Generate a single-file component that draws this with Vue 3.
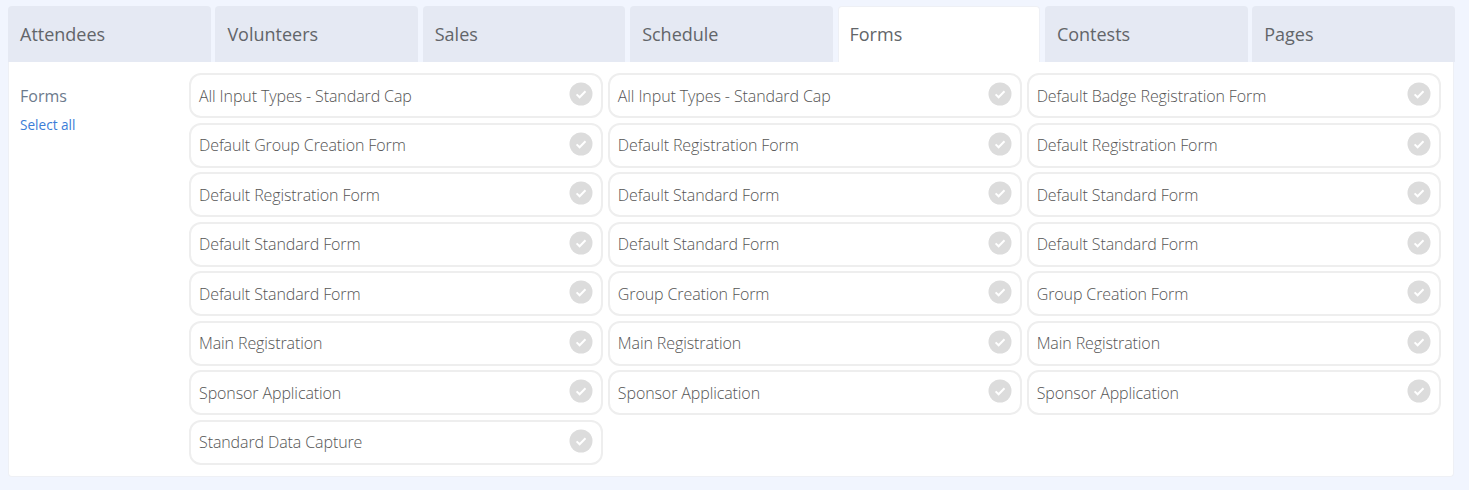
<template>
  <div class="page">
    <div class="tabs">
      <div v-for="tab in tabs" :key="tab" class="tab" :class="{ active: tab === 'Forms' }">{{ tab }}</div>
    </div>
    <div class="panel">
      <div class="side">
        <div class="side-title">Forms</div>
        <a class="select-all">Select all</a>
      </div>
      <div class="options">
        <div v-for="(form, i) in forms" :key="i" class="option">
          <span class="name">{{ form }}</span>
          <svg class="check" width="24" height="24" viewBox="0 0 24 24">
            <circle cx="12" cy="12" r="11.5" fill="#dcdcdc" />
            <path d="M7.6 12.4l3 2.9 5.9-6" fill="none" stroke="#fff" stroke-width="2" />
          </svg>
        </div>
      </div>
    </div>
  </div>
</template>

<script setup>
const tabs = ['Attendees', 'Volunteers', 'Sales', 'Schedule', 'Forms', 'Contests', 'Pages'];

const forms = [
  'All Input Types - Standard Cap',
  'All Input Types - Standard Cap',
  'Default Badge Registration Form',
  'Default Group Creation Form',
  'Default Registration Form',
  'Default Registration Form',
  'Default Registration Form',
  'Default Standard Form',
  'Default Standard Form',
  'Default Standard Form',
  'Default Standard Form',
  'Default Standard Form',
  'Default Standard Form',
  'Group Creation Form',
  'Group Creation Form',
  'Main Registration',
  'Main Registration',
  'Main Registration',
  'Sponsor Application',
  'Sponsor Application',
  'Sponsor Application',
  'Standard Data Capture',
];
</script>

<style scoped>
.page {
  box-sizing: border-box;
  height: 490px;
  padding: 6px 14px 13px 8px;
  background: #f1f5fe;
  font-family: "Open Sans", sans-serif;
  overflow: hidden;
}

.tabs {
  display: flex;
  justify-content: space-between;
  height: 56px;
}

.tab {
  flex: 0 0 202.7px;
  box-sizing: border-box;
  padding-left: 12px;
  line-height: 56px;
  font-size: 18px;
  font-weight: 500;
  color: #626569;
  background: #e5e9f3;
  border-radius: 4px 4px 0 0;
}

.tab.active {
  padding-left: 11px;
  line-height: 54px;
  background: #fff;
  border: 1px solid #eef0f5;
  border-bottom: none;
}

.panel {
  display: flex;
  box-sizing: border-box;
  height: 414.5px;
  margin-right: 1px;
  padding: 11px 12px 0 11px;
  background: #fff;
  border: 1px solid #eef0f5;
  border-top: none;
  border-radius: 0 0 4px 4px;
}

.side {
  flex: 0 0 169px;
  padding-top: 11px;
}

.side-title {
  font-size: 16px;
  line-height: 24px;
  color: #6c7a8c;
}

.select-all {
  display: block;
  margin-top: 7px;
  font-size: 13.6px;
  line-height: 19px;
  color: #3b7dd8;
}

.options {
  flex: 1;
  display: grid;
  grid-template-columns: repeat(3, 1fr);
  grid-auto-rows: 45px;
  gap: 4.5px 4.5px;
  align-content: start;
}

.option {
  display: flex;
  align-items: center;
  justify-content: space-between;
  box-sizing: border-box;
  padding: 0 8px;
  background: #fff;
  border: 2px solid #eeeeee;
  border-radius: 12px;
}

.name {
  font-size: 16px;
  font-weight: 300;
  letter-spacing: -0.1px;
  color: #555;
}

.check {
  margin-top: -3px;
}
</style>

<style>
body {
  margin: 0;
}
</style>
